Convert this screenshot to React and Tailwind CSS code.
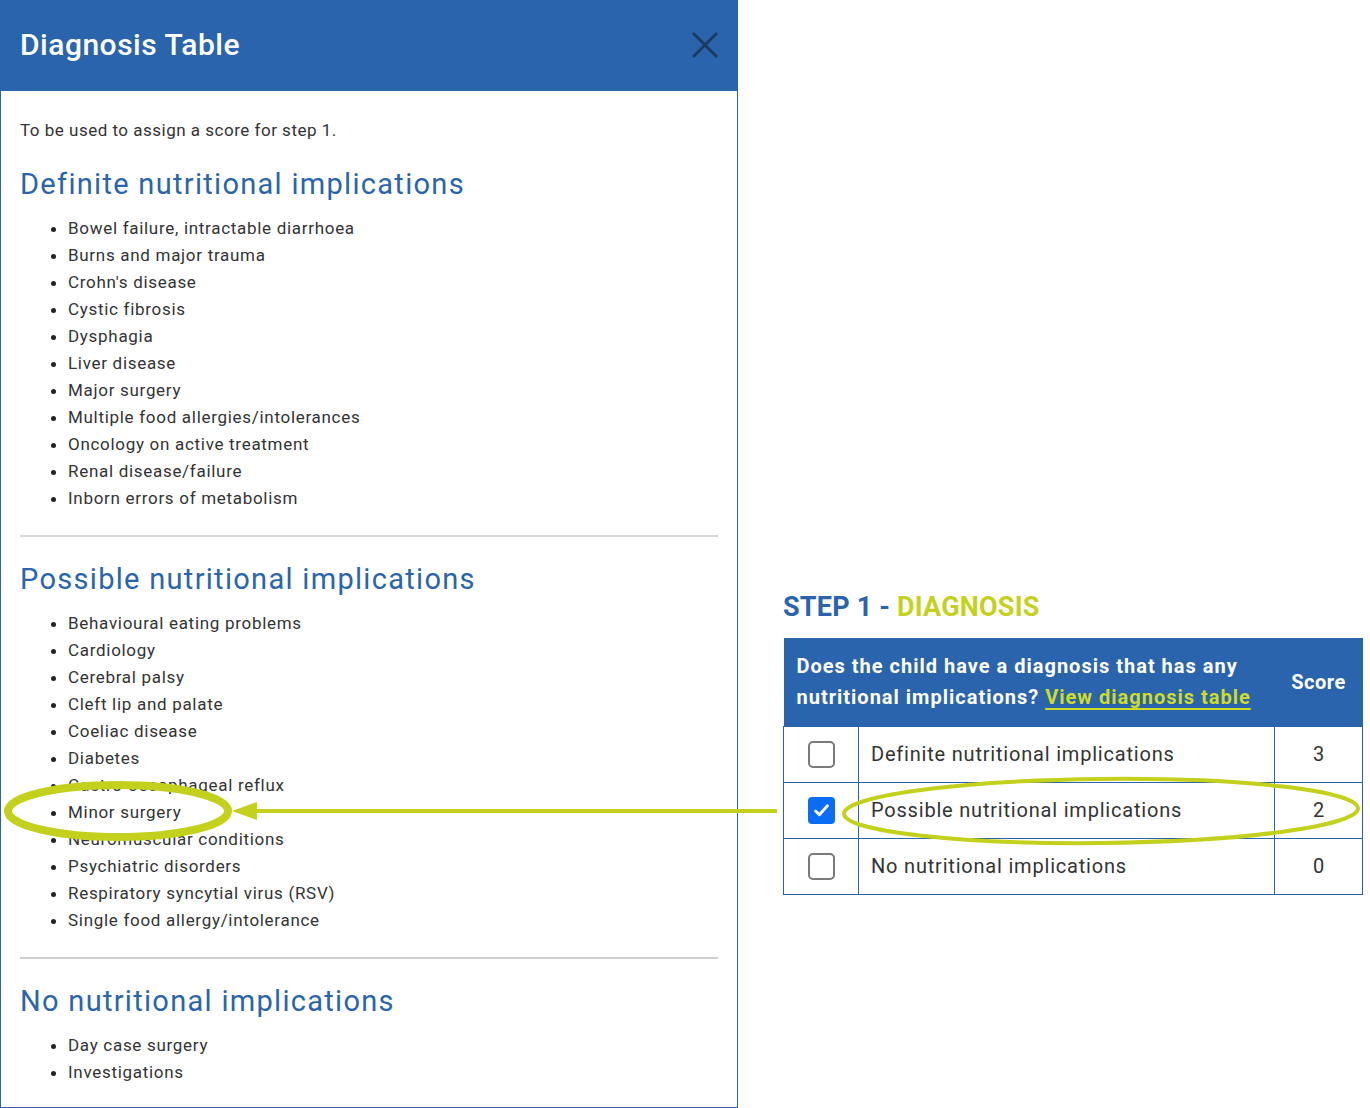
import React from "react";

const definite = [
  "Bowel failure, intractable diarrhoea",
  "Burns and major trauma",
  "Crohn's disease",
  "Cystic fibrosis",
  "Dysphagia",
  "Liver disease",
  "Major surgery",
  "Multiple food allergies/intolerances",
  "Oncology on active treatment",
  "Renal disease/failure",
  "Inborn errors of metabolism",
];

const possible = [
  "Behavioural eating problems",
  "Cardiology",
  "Cerebral palsy",
  "Cleft lip and palate",
  "Coeliac disease",
  "Diabetes",
  "Gastro-oesophageal reflux",
  "Minor surgery",
  "Neuromuscular conditions",
  "Psychiatric disorders",
  "Respiratory syncytial virus (RSV)",
  "Single food allergy/intolerance",
];

const none = ["Day case surgery", "Investigations"];

const rows = [
  { label: "Definite nutritional implications", score: 3, checked: false },
  { label: "Possible nutritional implications", score: 2, checked: true },
  { label: "No nutritional implications", score: 0, checked: false },
];

const font = { fontFamily: "Roboto, 'Noto Sans', sans-serif" };

const Section = ({ title, items }) => (
  <div>
    <h2 className="text-[29px] leading-[36px] text-[#2a64ad] tracking-[1.3px]">{title}</h2>
    <ul className="mt-[13px] pl-[48px] list-disc text-[17px] leading-[27px] text-[#333] tracking-[0.7px] marker:text-[#222]">
      {items.map((item) => (
        <li key={item}>{item}</li>
      ))}
    </ul>
  </div>
);

const Checkbox = ({ checked }) =>
  checked ? (
    <div className="w-[27px] h-[27px] rounded-[4px] bg-[#0b6cf5] flex items-center justify-center">
      <svg viewBox="0 0 24 24" className="w-[19px] h-[19px]" fill="none" stroke="white" strokeWidth="3.6" strokeLinecap="round" strokeLinejoin="round">
        <path d="M4.5 12.5l4.8 4.8L19.5 6" />
      </svg>
    </div>
  ) : (
    <div className="w-[27px] h-[27px] rounded-[5px] border-2 border-[#7a7a7a] bg-white" />
  );

export default function App() {
  return (
    <div className="relative w-[1370px] h-[1108px] bg-white flex" style={font}>
      {/* Modal */}
      <div className="w-[738px] h-[1108px] border border-[#2a63ab] flex flex-col">
        <div className="h-[90px] bg-[#2a64ad] flex items-center justify-between pl-[19px] pr-[18px]">
          <h1 className="text-[30px] text-white font-medium tracking-[0.5px] -mt-[3px]">Diagnosis Table</h1>
          <svg viewBox="0 0 28 28" className="w-[28px] h-[28px] -mt-[2px]" fill="none" stroke="#1b3b62" strokeWidth="3">
            <path d="M2 2l24 24M26 2L2 26" />
          </svg>
        </div>
        <div className="px-[19px] pt-[28px]">
          <p className="text-[17px] text-[#333] leading-[22px] tracking-[0.5px]">To be used to assign a score for step 1.</p>
          <div className="mt-[25px]">
            <Section title="Definite nutritional implications" items={definite} />
          </div>
          <div className="mt-[23px] h-[2px] bg-[#d6d6d6]" />
          <div className="mt-[24px]">
            <Section title="Possible nutritional implications" items={possible} />
          </div>
          <div className="mt-[23px] h-[2px] bg-[#cfcfcf]" />
          <div className="mt-[24px]">
            <Section title="No nutritional implications" items={none} />
          </div>
        </div>
      </div>

      {/* Step 1 */}
      <div className="flex-1 pl-[45px] pt-[591px]">
        <h3 className="text-[27px] font-bold leading-[32px] tracking-[0.2px]">
          <span className="text-[#2a64ad]">STEP 1 - </span>
          <span className="text-[#c4d21e]">DIAGNOSIS</span>
        </h3>
        <table className="mt-[15px] w-[580px] border-collapse">
          <thead>
            <tr className="bg-[#2a64ad] h-[88px]">
              <th colSpan={2} className="text-left pl-[13px] pr-1 text-white font-bold text-[20px] leading-[31px] tracking-[1px]">
                Does the child have a diagnosis that has any nutritional implications?{" "}
                <span className="text-[#cfdc24] underline underline-offset-[4px] decoration-2">View diagnosis table</span>
              </th>
              <th className="w-[88px] text-white font-bold text-[20px] text-center tracking-[0.5px]">Score</th>
            </tr>
          </thead>
          <tbody>
            {rows.map((r) => (
              <tr key={r.label} className="h-[56px]">
                <td className="w-[75px] border border-[#2a63ab]">
                  <div className="flex justify-center">
                    <Checkbox checked={r.checked} />
                  </div>
                </td>
                <td className="border border-[#2a63ab] pl-[12px] text-[20px] text-[#333] tracking-[0.8px]">{r.label}</td>
                <td className="border border-[#2a63ab] text-center text-[20px] text-[#333]">{r.score}</td>
              </tr>
            ))}
          </tbody>
        </table>
      </div>

      {/* Annotations */}
      <svg className="absolute inset-0 pointer-events-none" width="1370" height="1108" viewBox="0 0 1370 1108">
        <ellipse cx="118" cy="811" rx="110" ry="26" fill="none" stroke="#c3d01c" strokeWidth="8" />
        <line x1="777" y1="811" x2="250" y2="811" stroke="#c3d01c" strokeWidth="4" />
        <polygon points="232,811 257,802 257,820" fill="#c3d01c" />
        <ellipse cx="1101" cy="811" rx="257" ry="32" fill="none" stroke="#c3d01c" strokeWidth="4" transform="rotate(-0.6 1101 811)" />
      </svg>
    </div>
  );
}
